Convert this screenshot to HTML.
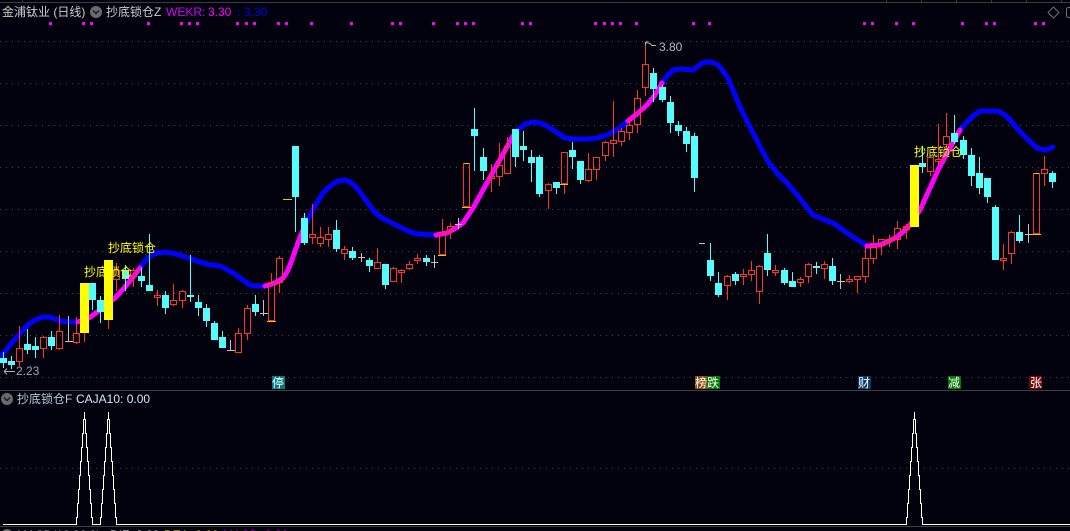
<!DOCTYPE html>
<html lang="zh">
<head>
<meta charset="utf-8">
<title>金浦钛业 (日线)</title>
<style>
html,body{margin:0;padding:0;background:#02020e;width:1070px;height:531px;overflow:hidden}
svg{display:block}
text{font-family:"Liberation Sans","Noto Sans CJK SC",sans-serif;font-size:12px}
</style>
</head>
<body>
<svg width="1070" height="531" viewBox="0 0 1070 531" xmlns="http://www.w3.org/2000/svg">
<rect width="1070" height="531" fill="#02020e"/>

<!-- frame -->
<path d="M0 2.5H1070M22.5 0V2M886.5 0V2M921.5 0V2M956.5 0V2M991.5 0V2M1026.5 0V2M1061.5 0V2" stroke="#3c3c3c" fill="none" shape-rendering="crispEdges"/>
<path d="M0 390.5H1070M0 526.5H1070" stroke="#3f3f3f" fill="none" shape-rendering="crispEdges"/>

<!-- grid -->
<path d="M0 41.5H1070M0 83.5H1070M0 125.5H1070M0 167.5H1070M0 209.5H1070M0 251.5H1070M0 293.5H1070M0 335.5H1070M0 377.5H1070M0 468.5H1070" stroke="#454545" stroke-dasharray="1 5" fill="none" shape-rendering="crispEdges"/>

<!-- magenta dots -->
<path fill="#ff00ff" shape-rendering="crispEdges" d="M49 22h3v3h-3zM82 22h3v3h-3zM90 22h3v3h-3zM147 22h3v3h-3zM180 22h3v3h-3zM188 22h3v3h-3zM196 22h3v3h-3zM236 22h3v3h-3zM245 22h3v3h-3zM253 22h3v3h-3zM277 22h3v3h-3zM285 22h3v3h-3zM310 22h3v3h-3zM350 22h3v3h-3zM391 22h3v3h-3zM399 22h3v3h-3zM432 22h3v3h-3zM456 22h3v3h-3zM464 22h3v3h-3zM472 22h3v3h-3zM521 22h3v3h-3zM529 22h3v3h-3zM594 22h3v3h-3zM603 22h3v3h-3zM611 22h3v3h-3zM619 22h3v3h-3zM635 22h3v3h-3zM692 22h3v3h-3zM708 22h3v3h-3zM863 22h3v3h-3zM871 22h3v3h-3zM895 22h3v3h-3zM912 22h3v3h-3zM961 22h3v3h-3zM985 22h3v3h-3zM993 22h3v3h-3zM1034 22h3v3h-3zM1042 22h3v3h-3z"/>

<!-- curve -->
<g fill="none" stroke-width="5" stroke-linejoin="round" stroke-linecap="round" shape-rendering="crispEdges">
<g stroke="#0000ff">
<polyline points="0,358 3,354 10,345 17,337 24,329 30,323 37,319 43,317 50,317 55,319 60,321 70,322 78,322"/>
<polyline points="140,268 144,262 148,258 152,255 157,253 165,252 172,253 180,255 197,261 210,265 220,266 226,269 233,273 243,280 250,285 256,286 265,286"/>
<polyline points="303,230 308,219 313,210 318,201 323,193 328,188 333,184 338,181 345,180 350,182 355,186 360,192 373,210 378,215 382,218 390,222 410,232 418,234 436,235"/>
<polyline points="513,136 519,129 525,124 533,122 540,123 547,126 556,132 565,138 575,139 587,139 597,138 607,135 618,129 628,121"/>
<polyline points="662,83 667,76 673,70 680,69 693,70 697,67 702,63 706,62 710,62 714,63 718,65 723,71 728,78 733,90 740,107 750,127 767,160 777,173 787,183 798,196 806,206 813,215 825,220 833,223 850,235 867,246"/>
<polyline points="960,130 967,122 973,116 980,111 998,111 1005,115 1010,120 1023,135 1037,148 1041,149 1045,150 1049,149 1053,147"/>
</g>
<g stroke="#ff00ff">
<polyline points="78,322 89,318 100,310 115,298 125,287 133,277 140,268"/>
<polyline points="265,286 272,284 277,282 283,278 287,272 290,265 293,257 300,237 303,230"/>
<polyline points="436,235 447,233 456,228 463,223 473,208 483,190 493,172 507,147 513,136"/>
<polyline points="628,121 638,113 647,105 655,95 662,83"/>
<polyline points="867,246 880,245 889,241 897,237 904,231 910,225 920,210 930,188 938,170 950,148 960,130"/>
</g>
</g>

<!-- cyan candles -->
<path fill="#54fcfc" shape-rendering="crispEdges" d="M0 358h7v5h-7zM3 352h1v16h-1zM8 361h7v4h-7zM11 356h1v13h-1zM24 344h7v6h-7zM27 329h1v25h-1zM32 346h7v4h-7zM35 337h1v21h-1zM48 337h7v9h-7zM51 331h1v19h-1zM89 283h7v17h-7zM92 283h1v27h-1zM97 300h7v12h-7zM100 296h1v27h-1zM122 270h7v9h-7zM125 265h1v26h-1zM138 276h7v5h-7zM141 268h1v19h-1zM146 285h7v6h-7zM149 234h1v57h-1zM162 295h7v13h-7zM165 291h1v23h-1zM187 295h7v2h-7zM190 255h1v47h-1zM195 302h7v6h-7zM198 295h1v21h-1zM203 308h7v13h-7zM206 304h1v23h-1zM211 323h7v17h-7zM214 321h1v19h-1zM219 337h7v11h-7zM222 331h1v17h-1zM252 304h7v8h-7zM255 295h1v21h-1zM292 146h7v51h-7zM295 146h1v86h-1zM301 218h7v25h-7zM304 213h1v32h-1zM333 230h7v19h-7zM336 220h1v32h-1zM349 251h7v7h-7zM352 247h1v13h-1zM366 260h7v6h-7zM369 258h1v14h-1zM382 264h7v21h-7zM385 264h1v25h-1zM423 258h7v4h-7zM426 255h1v11h-1zM471 129h7v7h-7zM474 108h1v63h-1zM480 157h7v14h-7zM483 148h1v32h-1zM512 129h7v28h-7zM515 129h1v38h-1zM520 146h7v4h-7zM523 131h1v30h-1zM528 157h7v6h-7zM531 150h1v32h-1zM536 157h7v37h-7zM539 155h1v42h-1zM553 182h7v6h-7zM556 182h1v12h-1zM569 150h7v7h-7zM572 142h1v27h-1zM577 161h7v19h-7zM580 161h1v23h-1zM650 73h7v16h-7zM653 68h1v34h-1zM659 87h7v13h-7zM662 85h1v17h-1zM667 102h7v21h-7zM670 96h1v37h-1zM675 125h7v6h-7zM678 121h1v15h-1zM683 131h7v13h-7zM686 127h1v25h-1zM691 136h7v42h-7zM694 133h1v59h-1zM707 260h7v16h-7zM710 243h1v38h-1zM715 283h7v12h-7zM718 272h1v25h-1zM732 274h7v7h-7zM735 272h1v13h-1zM764 253h7v17h-7zM767 234h1v42h-1zM781 270h7v13h-7zM784 268h1v17h-1zM789 281h7v6h-7zM792 272h1v15h-1zM813 266h7v2h-7zM816 262h1v12h-1zM829 266h7v15h-7zM832 258h1v27h-1zM919 163h7v4h-7zM922 146h1v27h-1zM951 133h7v9h-7zM954 115h1v29h-1zM960 140h7v15h-7zM963 136h1v23h-1zM968 155h7v21h-7zM971 148h1v38h-1zM976 173h7v15h-7zM979 157h1v37h-1zM984 178h7v19h-7zM987 178h1v25h-1zM992 207h7v53h-7zM995 205h1v55h-1zM1016 232h7v9h-7zM1019 215h1v28h-1zM1049 173h7v9h-7zM1052 171h1v17h-1z"/>

<!-- red candles -->
<path fill="none" stroke="#ff3232" stroke-width="1" shape-rendering="crispEdges" d="
M16.5 348.5h6v13h-6zM19.5 326V348M19.5 362V366
M40.5 337.5h6v11h-6zM43.5 336V337M43.5 349V358
M56.5 331.5h6v17h-6zM59.5 315V331M59.5 349V350
M73.5 333.5h6v9h-6zM76.5 317V333M76.5 343V344
M84.5 333V342M108.5 320V329
M113.5 270.5h6v9h-6zM116.5 263V270M116.5 280V291
M130.5 270.5h6v6h-6zM133.5 268V270M133.5 277V287
M154.5 295.5h6v2h-6zM157.5 290V295M157.5 298V306
M170.5 300.5h6v4h-6zM173.5 284V300M173.5 305V306
M179.5 291.5h6v9h-6zM182.5 290V291M182.5 301V308
M235.5 333.5h6v19h-6zM238.5 328V333
M244.5 308.5h6v25h-6zM247.5 305V308M247.5 334V340
M268.5 283.5h6v37h-6zM271.5 273V283
M276.5 258.5h6v24h-6zM279.5 256V258M279.5 283V293
M309.5 234.5h6v3h-6zM312.5 204V234M312.5 238V244
M317.5 237.5h6v6h-6zM320.5 227V237M320.5 244V247
M325.5 234.5h6v5h-6zM328.5 227V234M328.5 240V247
M341.5 249.5h6v4h-6zM344.5 246V249M344.5 254V260
M374.5 262.5h6v6h-6zM377.5 248V262
M390.5 268.5h6v13h-6zM393.5 267V268
M398.5 270.5h6v2h-6zM401.5 269V270M401.5 273V283
M406.5 264.5h6v4h-6zM409.5 261V264M409.5 269V270
M414.5 258.5h6v2h-6zM417.5 254V258M417.5 261V264
M439.5 232.5h6v22h-6zM442.5 219V232
M447.5 226.5h6v5h-6zM450.5 223V226M450.5 232V239
M463.5 163.5h6v43h-6z
M488.5 176.5h6v2h-6zM491.5 164V176M491.5 179V192
M496.5 165.5h6v11h-6zM499.5 143V165M499.5 177V186
M504.5 146.5h6v27h-6zM507.5 137V146
M545.5 184.5h6v6h-6zM548.5 183V184M548.5 191V209
M561.5 152.5h6v31h-6zM564.5 184V194
M585.5 169.5h6v11h-6zM588.5 153V169M588.5 181V182
M593.5 157.5h6v12h-6zM596.5 170V180
M602.5 142.5h6v13h-6zM605.5 141V142M605.5 156V161
M610.5 140.5h6v3h-6zM613.5 101V140M613.5 144V157
M618.5 131.5h6v10h-6zM621.5 128V131M621.5 142V146
M626.5 125.5h6v7h-6zM629.5 118V125M629.5 133V140
M634.5 98.5h6v26h-6zM637.5 90V98M637.5 125V133
M642.5 64.5h6v23h-6zM645.5 42V64M645.5 88V96
M724.5 276.5h6v9h-6zM727.5 275V276M727.5 286V300
M740.5 274.5h6v2h-6zM743.5 269V274M743.5 277V285
M748.5 270.5h6v4h-6zM751.5 261V270M751.5 275V281
M756.5 266.5h6v25h-6zM759.5 265V266M759.5 292V304
M772.5 270.5h6v2h-6zM775.5 265V270M775.5 273V276
M797.5 279.5h6v3h-6zM800.5 277V279M800.5 283V287
M805.5 264.5h6v12h-6zM808.5 263V264M808.5 277V283
M821.5 264.5h6v4h-6zM824.5 261V264M824.5 269V279
M846.5 279.5h6v2h-6zM849.5 275V279M849.5 282V283
M854.5 276.5h6v3h-6zM857.5 280V293
M862.5 258.5h6v18h-6zM865.5 247V258M865.5 277V283
M870.5 247.5h6v11h-6zM873.5 235V247M873.5 259V264
M878.5 239.5h6v6h-6zM881.5 246V255
M886.5 239.5h6v2h-6zM889.5 235V239M889.5 242V247
M894.5 228.5h6v11h-6zM897.5 221V228M897.5 240V249
M903.5 226.5h6v3h-6zM906.5 224V226M906.5 230V239
M927.5 157.5h6v14h-6zM930.5 172V176
M935.5 159.5h6v2h-6zM938.5 124V159M938.5 162V167
M943.5 136.5h6v8h-6zM946.5 113V136M946.5 145V147
M1000.5 258.5h6v2h-6zM1003.5 244V258M1003.5 261V270
M1008.5 232.5h6v21h-6zM1011.5 231V232M1011.5 254V264
M1033.5 173.5h6v60h-6z
M1041.5 169.5h6v4h-6zM1044.5 156V169M1044.5 174V186"/>

<!-- gray crosses -->
<path fill="none" stroke="#c4c4c4" stroke-width="1" shape-rendering="crispEdges" d="M65 341.5h8M68.5 316V342M227 350.5h8M230.5 340V350M260 313.5h8M263.5 300V316M358 257.5h7M361.5 253V262M431 262.5h7M434.5 255V268M455 224.5h7M458.5 218V229M837 281.5h8M840.5 274V289M1025 234.5h8M1028.5 224V243M699 243.5h6"/>

<!-- yellow limit ticks -->
<path fill="none" stroke="#f2c400" stroke-width="1" shape-rendering="crispEdges" d="M267 321.5h9M283 199.5h9M438 255.5h8M462 207.5h9M464 163.5h5M560 184.5h8M1032 234.5h9M1034 173.5h5"/>

<!-- yellow bars -->
<path fill="#ffff00" shape-rendering="crispEdges" d="M80 283h9v50h-9zM104 260h9v60h-9zM910 165h9v62h-9z"/>

<!-- labels -->
<g fill="#ffff00">
<text x="84" y="276">抄底锁仓</text>
<text x="108" y="252">抄底锁仓</text>
<text x="914" y="156">抄底锁仓</text>
</g>

<!-- annotations -->
<path d="M4 371.5H15M4 371.5l3-3M4 371.5l3 3" stroke="#b0b0b0" fill="none"/>
<text x="16" y="375" fill="#9aa6b4">2.23</text>
<path d="M645.5 42.5l2-1.5M645.5 42.5v3M646 42.5l4 1 2 2 4 0" stroke="#b4b4b4" fill="none"/>
<text x="659" y="51" fill="#b0b8c0">3.80</text>

<!-- header -->
<text x="2" y="16" fill="#cccccc">金浦钛业 (日线)</text>
<circle cx="96" cy="12" r="6" fill="#6a6a6a"/>
<path d="M93 10.5l3 3 3-3" stroke="#1a1a1a" stroke-width="1.4" fill="none"/>
<text x="106" y="16" fill="#cccccc">抄底锁仓Z</text>
<text x="166" y="16" fill="#d000ff">WEKR:</text>
<text x="208" y="16" fill="#ff00ff">3.30</text>
<text x="237" y="16" fill="#0000e8">:</text>
<text x="244" y="16" fill="#0000e8">3.30</text>

<!-- top-right icons -->
<path d="M1053.5 7l5.5 5.5-5.5 5.5-5.5-5.5z" stroke="#707070" fill="none"/>
<rect x="1066.5" y="7.5" width="8" height="10" rx="2" stroke="#707070" fill="none"/>

<!-- badges -->
<path shape-rendering="crispEdges" fill="#007a7a" d="M272 376h13v13h-13z"/>
<path shape-rendering="crispEdges" fill="#8a4c10" d="M695 376h12v13h-12z"/>
<path shape-rendering="crispEdges" fill="#007a00" d="M707 376h13v13h-13z"/>
<path shape-rendering="crispEdges" fill="#0a3a6c" d="M858 376h13v13h-13z"/>
<path shape-rendering="crispEdges" fill="#007a00" d="M948 376h13v13h-13z"/>
<path shape-rendering="crispEdges" fill="#7a0a0a" d="M1029 376h13v13h-13z"/>
<g fill="#ffffff">
<text x="272" y="387">停</text>
<text x="695" y="387">榜</text>
<text x="707" y="387">跌</text>
<text x="858" y="387">财</text>
<text x="948" y="387">减</text>
<text x="1030" y="387">张</text>
</g>

<!-- sub panel -->
<circle cx="7" cy="399" r="6" fill="#6a6a6a"/>
<path d="M4 397.5l3 3 3-3" stroke="#1a1a1a" stroke-width="1.4" fill="none"/>
<text x="17" y="403" fill="#b8c8d8">抄底锁仓F</text>
<text x="76" y="403" fill="#d8e8f8">CAJA10: 0.00</text>

<path fill="none" stroke="#ffffff" stroke-width="1" shape-rendering="crispEdges" d="M3 524.5H76.5V517.5H77.5V503.5H78.5V489.5H79.5V475.5H80.5V461.5H81.5V447.5H82.5V433.5H83.5V419.5H84.5V412M84.5 419.5H85.5V433.5H86.5V447.5H87.5V461.5H88.5V475.5H89.5V489.5H90.5V503.5H91.5V517.5H92.5V524.5H100.5V517.5H101.5V503.5H102.5V489.5H103.5V475.5H104.5V461.5H105.5V447.5H106.5V433.5H107.5V419.5H108.5V412M108.5 419.5H109.5V433.5H110.5V447.5H111.5V461.5H112.5V475.5H113.5V489.5H114.5V503.5H115.5V517.5H116.5V524.5H906.5V517.5H907.5V503.5H908.5V489.5H909.5V475.5H910.5V461.5H911.5V447.5H912.5V433.5H913.5V419.5H914.5V412M914.5 419.5H915.5V433.5H916.5V447.5H917.5V461.5H918.5V475.5H919.5V489.5H920.5V503.5H921.5V517.5H922.5V524.5H1070"/>

<!-- clipped bottom row -->
<circle cx="7" cy="535" r="6" fill="#6a6a6a"/>
<text x="17" y="539" fill="#c4c4c4">MACD(12,26,9)</text>
<text x="110" y="539" fill="#ffffff">DIF: 0.00</text>
<text x="164" y="539" fill="#ffff00">DEA: 0.00</text>
<text x="223" y="539" fill="#ff00ff">MACD: 0.00</text>
</svg>
</body>
</html>
